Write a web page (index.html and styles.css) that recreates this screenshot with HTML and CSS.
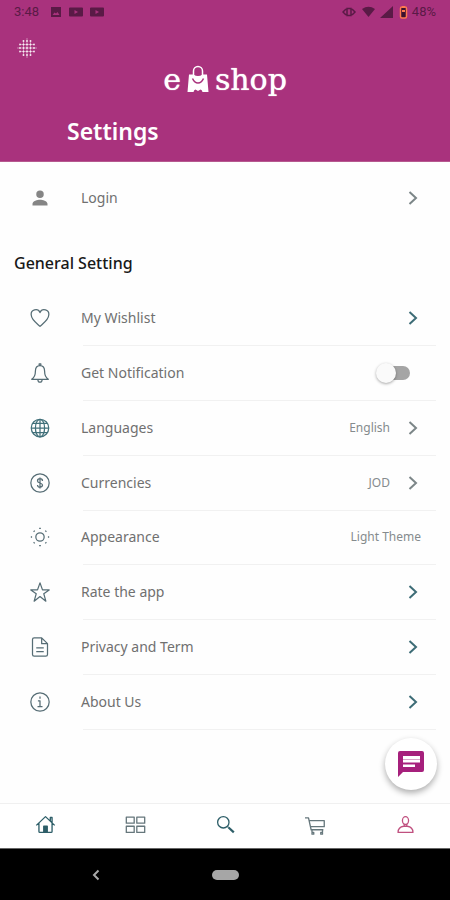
FILE: index.html
```html
<!DOCTYPE html>
<html lang="en">
<head>
<meta charset="utf-8">
<meta name="viewport" content="width=device-width, initial-scale=1">
<title>Settings</title>
<link rel="stylesheet" href="styles.css">
</head>
<body>
<svg class="defs" aria-hidden="true">
  <symbol id="chevron" viewBox="0 0 10 16"><path d="M1.500 2 8 8 1.500 14"/></symbol>
</svg>
<div class="app">
  <header class="header">
    <div class="status">
      <span>3:48</span>
      <svg class="status-left" width="56" height="12" viewBox="0 0 56 12" aria-hidden="true">
        <path fill="currentColor" fill-rule="evenodd" d="M2 1h10v10H2zM3.500 9h7L8.500 6 7 7.500 5.500 6.500zM21 1.500h12q1 0 1 1v7q0 1-1 1H21q-1 0-1-1v-7q0-1 1-1zM25.500 4v4l3.500-2zM42 1.500h12q1 0 1 1v7q0 1-1 1H42q-1 0-1-1v-7q0-1 1-1zM46.500 4v4L50 6z"/>
      </svg>
      <svg class="status-right" width="66" height="14" viewBox="0 0 66 14" aria-hidden="true">
        <path fill="none" stroke="currentColor" stroke-width="1.500" d="M4 4 1 7l3 3M10 4l3 3-3 3M5 3.500h4v7H5z"/>
        <path fill="currentColor" d="M20 4q6.500-4.500 13 0l-6.500 8zM51 1v12H38z"/>
        <rect x="58.500" y="2" width="6" height="11" rx="1.500" fill="#3b1230" stroke="#ff7a50" stroke-width="1.500"/>
        <path fill="#ff7a50" d="M60 1h3v2h-3zM60 5h3v2h-3z"/>
      </svg>
      <span>48%</span>
    </div>
    <button class="menu" type="button" aria-label="Menu">
      <svg width="20" height="20" viewBox="0 0 20 20" aria-hidden="true">
        <g fill="none" stroke="#fff" stroke-width="2" stroke-linecap="round" opacity=".8">
          <path stroke-dasharray="0 3.500" d="M6.500 3h8M3 6.500h15M3 10h15M3 13.500h15M6.500 17h8"/>
        </g>
        <g fill="none" stroke="#fff" stroke-width="1" opacity=".4"><path d="M10 0v20M6.500 2v16M13.500 2v16M0 10h20M3 6.500h14M3 13.500h14"/></g>
      </svg>
    </button>
    <div class="logo">
      <span>e</span>
      <svg width="22" height="28" viewBox="0 0 22 28" aria-hidden="true">
        <path fill="none" stroke="#fff" stroke-width="1.500" d="M6.500 12V6a4.500 4.500 0 0 1 9 0V12"/>
        <path fill="#fff" d="M2 9.500h4.500q4.500 3 9 0H20L21.500 27h-6q-.5-2.500-2-2.500L11 26l-2.500-1.500q-1.500 0-2 2.500h-6z"/>
        <path fill="none" stroke="#a9327d" stroke-width="1.500" d="M5.500 13.500Q7.500 18 11 18t5.500-4.500"/>
      </svg>
      <span>shop</span>
    </div>
    <h1>Settings</h1>
  </header>

  <main class="main">
    <a class="row login" href="#login">
      <svg class="icon" viewBox="0 0 24 24" aria-hidden="true"><path fill="#858585" d="M12 12a4.500 4.500 0 1 0 0-9 4.500 4.500 0 0 0 0 9zm0 2c-3 0-9 1.500-9 5V21h18v-2c0-3.500-6-5-9-5z"/></svg>
      <span class="label">Login</span>
      <svg class="chev muted"><use href="#chevron"/></svg>
    </a>
    <h2>General Setting</h2>
    <ul class="list">
      <li><a class="row" href="#wishlist">
        <svg class="icon" viewBox="0 0 24 24" aria-hidden="true"><path d="M12 22C7.500 18 1.500 14 1.500 8.500a5.500 5.500 0 0 1 10.500-3 5.500 5.500 0 0 1 10.500 3c0 5.500-6 9.500-10.500 13.500z"/></svg>
        <span class="label">My Wishlist</span>
        <svg class="chev"><use href="#chevron"/></svg>
      </a></li>
      <li><label class="row">
        <svg class="icon" viewBox="0 0 24 24" aria-hidden="true"><path d="M11 3V1h2v2M12 3C8 3 6.500 6 6.500 9.500c0 5-.5 7.500-4.500 10h20c-4-2.500-4.500-5-4.500-10C17.500 6 16 3 12 3zM9.500 20q0 3 2.500 3t2.500-3"/></svg>
        <span class="label">Get Notification</span>
        <input class="switch" type="checkbox" role="switch">
      </label></li>
      <li><a class="row" href="#languages">
        <svg class="icon globe" viewBox="0 0 24 24" aria-hidden="true"><circle cx="12" cy="12" r="10.500"/><ellipse cx="12" cy="12" rx="5.500" ry="10.500"/><path d="M12 1.500v21M1.500 12h21M3.500 6.500h17M3.500 17.500h17"/></svg>
        <span class="label">Languages</span><span class="value">English</span>
        <svg class="chev muted"><use href="#chevron"/></svg>
      </a></li>
      <li><a class="row" href="#currencies">
        <svg class="icon" viewBox="0 0 24 24" aria-hidden="true"><circle cx="12" cy="12" r="11"/><path d="M15 9.500C15 6 9 6 9 9.500c0 3 6 2 6 5s-6 3.500-6 0M12 5.500v13"/></svg>
        <span class="label">Currencies</span><span class="value">JOD</span>
        <svg class="chev muted"><use href="#chevron"/></svg>
      </a></li>
      <li><button class="row" type="button">
        <svg class="icon" viewBox="0 0 24 24" aria-hidden="true"><circle cx="12" cy="12" r="5"/><path class="rays" d="M12 1v1.500M12 21.500V23M1 12h1.500M21.500 12H23M4.500 4.500l1 1M18.500 18.500l1 1M4.500 19.500l1-1M18.500 5.500l1-1"/></svg>
        <span class="label">Appearance</span><span class="value">Light Theme</span>
      </button></li>
      <li><a class="row" href="#rate">
        <svg class="icon" viewBox="0 0 24 24" aria-hidden="true"><path d="m12 1 3 8.500h8L16.500 14 19 23l-7-5.500L5 23l2.500-9L1 9.500h8z"/></svg>
        <span class="label">Rate the app</span>
        <svg class="chev"><use href="#chevron"/></svg>
      </a></li>
      <li><a class="row" href="#privacy">
        <svg class="icon" viewBox="0 0 24 24" aria-hidden="true"><path d="M14 1H5Q3 1 3 3v18q0 2 2 2h14q2 0 2-2V8zV8h7M7.500 13h9M7.500 17.500h9"/></svg>
        <span class="label">Privacy and Term</span>
        <svg class="chev"><use href="#chevron"/></svg>
      </a></li>
      <li><a class="row" href="#about">
        <svg class="icon" viewBox="0 0 24 24" aria-hidden="true"><circle cx="12" cy="12" r="11"/><path d="M9.500 10.500H12V17M9 17.500h6M12 5.500v2.500"/></svg>
        <span class="label">About Us</span>
        <svg class="chev"><use href="#chevron"/></svg>
      </a></li>
    </ul>
    <button class="chat" type="button" aria-label="Chat">
      <svg width="28" height="28" viewBox="0 0 28 28" aria-hidden="true"><path fill="#a6207c" d="M3 1h22q2 0 2 2v17q0 2-2 2H6l-5 5V3q0-2 2-2z"/><path fill="#fff" d="M6 6h17v6.500H6zM6 14.500h12V17H6z"/><path stroke="#d9a3c8" d="M6 9.500h17"/></svg>
    </button>
  </main>

  <nav class="tabs" aria-label="Main">
    <a href="#home" aria-label="Home"><svg class="tab" viewBox="0 0 24 24"><path d="M1.500 13 12 3l10.500 10M4.500 10.500V20q0 1 1 1h13q1 0 1-1v-9.500M17.500 8V4h2v6"/><path fill="currentColor" d="M10 14h4v7h-4z"/></svg></a>
    <a href="#categories" aria-label="Categories"><svg class="tab grey" viewBox="0 0 24 24"><path d="M1.500 3.500h9v7h-9zM13.500 3.500h9v7h-9zM1.500 14h9v7h-9zM13.500 14h9v7h-9z"/></svg></a>
    <a href="#search" aria-label="Search"><svg class="tab" viewBox="0 0 24 24"><circle cx="9.500" cy="9.500" r="6.500"/><path d="m14.500 14.500 1 1"/><path stroke-width="2.500" d="m15.500 15.500 6 5.500"/></svg></a>
    <a href="#cart" aria-label="Cart"><svg class="tab grey" viewBox="0 0 24 24"><path d="M0 4.500h4L7 18h14M5 7.500h17v7H6.500M8 18v2.500M20 18v2.500"/><path d="M8 21h2v2H8zM18 21h2v2h-2z"/></svg></a>
    <a class="current" href="#account" aria-label="Account" aria-current="page"><svg class="tab" viewBox="0 0 24 24"><ellipse cx="12" cy="7.500" rx="3.500" ry="4.500"/><path d="M3.500 21c0-4 3-6.500 6.500-7h4c3.500.5 6.500 3 6.500 7zM10.500 11.500V14M13.500 11.500V14"/></svg></a>
  </nav>
  <div class="system">
    <button type="button" aria-label="Back"><svg width="8" height="12" viewBox="0 0 8 12"><path fill="none" stroke="#aaa" stroke-width="2" d="M6.500 1.500 2 6l4.500 4.500"/></svg></button>
    <button class="pill" type="button" aria-label="System home"></button>
    <span></span>
  </div>
</div>
</body>
</html>
```
FILE: styles.css
```css
* { box-sizing: border-box; }
body {
  margin: 0;
  background: #fefefe;
  color: #707070;
  font-family: "Noto Sans", sans-serif;
}
button { padding: 0; border: 0; background: none; color: inherit; font: inherit; }
a { color: inherit; text-decoration: none; }
svg { display: block; flex: none; }
.defs { position: absolute; width: 0; height: 0; }

.app { display: flex; flex-direction: column; min-height: 100vh; }

.header { background: #a9327d; color: #fff; padding-bottom: 13px; border-bottom: 1px solid #b6598f; }
.status {
  display: flex;
  align-items: center;
  height: 24px;
  padding: 0 14px;
  color: #5a1a46;
  font: 13px/24px Roboto, sans-serif;
}
.status-left { margin-left: 10px; }
.status-right { margin-left: auto; margin-right: 4px; }
.menu { display: block; margin: 14px 0 0 17px; }
.logo {
  display: flex;
  justify-content: center;
  align-items: center;
  gap: 6px;
  height: 40px;
  margin-top: 2px;
  font: 30px/40px "DejaVu Serif", serif;
  text-shadow: 0 0 1px #fff;
}
.logo svg { margin-bottom: 2px; }
h1 { margin: 14px 0 0 67px; font-size: 23px; line-height: 34px; font-weight: 600; }

.main { display: flex; flex-direction: column; flex: 1; position: relative; padding-bottom: 73px; }
.row {
  display: flex;
  align-items: center;
  width: 100%;
  height: 100%;
  padding: 0 32px 0 30px;
  font-size: 14px;
  line-height: 20px;
  text-align: left;
}
.row.login { height: 71px; }
.icon { width: 20px; height: 20px; margin-right: 31px; }
.icon, .tab { fill: none; stroke: #566d75; stroke-width: 1.5; stroke-linejoin: round; }
.login .icon { stroke: none; }
.globe { stroke: #41707a; }
.rays { stroke-width: 2; }
.label { flex: 1; }
.value { color: #858b8d; font-size: 12px; margin-right: 18px; }
.value:last-child { margin-right: -3px; }
.chev { width: 10px; height: 16px; fill: none; stroke: #3d6c76; stroke-width: 2; }
.chev.muted { stroke: #7c8688; }
h2 { margin: 16px 0 14px 14px; color: #181818; font-size: 16px; line-height: 28px; font-weight: 500; }
.list { display: flex; flex-direction: column; flex: 1; margin: 0; padding: 0; list-style: none; }
.list li { flex: 1; display: flex; flex-direction: column; min-height: 48px; }
.list .row { flex: 1; height: auto; }
.list li::after { content: ""; height: 1px; margin: 0 14px 0 83px; background: #f1f1f1; }

.switch {
  appearance: none;
  display: flex;
  align-items: center;
  width: 28px;
  height: 14px;
  margin: 0 8px 0 0;
  border-radius: 7px;
  background: #a5a5a5;
}
.switch::before {
  content: "";
  width: 20px;
  height: 20px;
  margin-left: -6px;
  flex: none;
  border-radius: 50%;
  background: #fafafa;
  box-shadow: 0 1px 3px rgba(0, 0, 0, .35);
}
.switch:checked { justify-content: flex-end; background: #a9327d; }

.chat {
  position: absolute;
  right: 13px;
  bottom: 13px;
  display: grid;
  place-items: center;
  width: 52px;
  height: 52px;
  border-radius: 50%;
  background: #fff;
  box-shadow: 0 3px 6px rgba(0, 0, 0, .32);
}

.tabs { display: grid; grid-template-columns: repeat(5, 1fr); height: 45px; padding-bottom: 4px; border-top: 1px solid #f0f0f0; background: #fff; }
.tabs a { display: grid; place-items: center; color: #2d5e68; }
.tab { width: 21px; height: 21px; stroke: currentColor; }
.tab.grey { color: #66777c; }
.tabs .current { color: #c0507f; }

.system { display: grid; grid-template-columns: 1fr auto 1fr; align-items: center; justify-items: center; height: 52px; border-top: 1px solid #666; background: #000; }
.system button:first-child { margin-right: 20px; }
.pill { width: 27px; height: 10px; border-radius: 5px; background: #a6a6a6; }
```
